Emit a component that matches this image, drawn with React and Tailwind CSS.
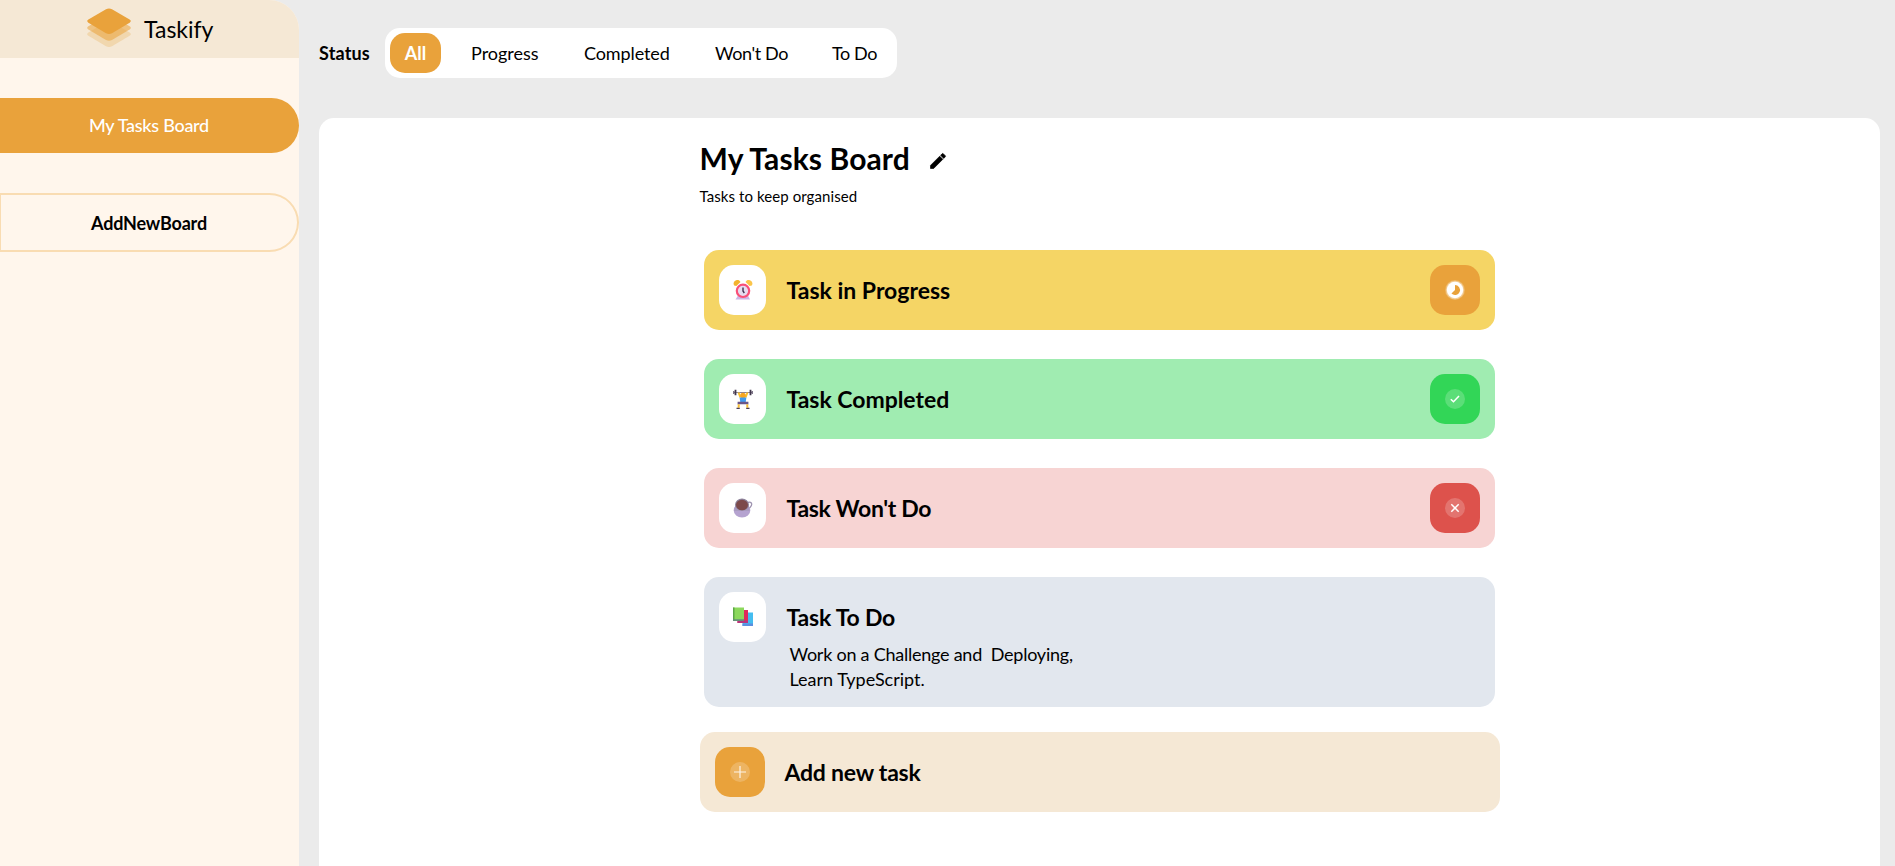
import React from "react";

function Logo() {
  return (
    <svg width="46" height="40" viewBox="0 0 46 40" className="shrink-0" fill="#e9a23b">
      <path opacity=".25" d="M20 14.2Q23 12.6 26 14.2L43.600 24.4Q46 26 43.600 27.800L26 38.300Q23 39.800 20 38.300L2.400 27.800Q0 26 2.400 24.400Z" />
      <path opacity=".55" d="M20 8Q23 6.400 26 8L43.600 18.200Q46 19.800 43.600 21.600L26 32.100Q23 33.600 20 32.100L2.400 21.600Q0 19.800 2.400 18.200Z" />
      <path d="M20 1.200Q23 -.4 26 1.200L43.600 11.400Q46 13 43.600 14.800L26 25.300Q23 26.800 20 25.300L2.400 14.800Q0 13 2.400 11.400Z" />
    </svg>
  );
}

function Clock() {
  return (
    <svg width="20" height="20" viewBox="0 0 20 20">
      <path d="M2.500 19.500l2.500-4h10l2 4z" fill="#cdb6e6" />
      <path d="M1.200 5.500a3.600 3.600 0 0 1 6.300-3.600L3.400 6z" fill="#f3b32f" />
      <path d="M18.800 5.500a3.600 3.600 0 0 0-6.300-3.600L16.600 6z" fill="#fbc54a" />
      <circle cx="10" cy="10.800" r="6.200" fill="#e6dcf0" stroke="#fa4f78" strokeWidth="2.200" />
      <path d="M10 7.500v3.500l1.300 2" stroke="#43304f" strokeWidth="1.400" fill="none" />
    </svg>
  );
}

function Lifter() {
  return (
    <svg width="20" height="20" viewBox="0 0 20 20">
      <path d="M1 3.500h18" stroke="#8b8496" strokeWidth="1" />
      <path d="M2.500 .8v5.400M17.500 .8v5.400" stroke="#40364c" strokeWidth="1.800" />
      <path d="M.8 2v3M19.200 2v3" stroke="#5c5168" strokeWidth="1.200" />
      <path d="M5.500 3.500l2 5M14.500 3.500l-2 5" stroke="#fbc02d" strokeWidth="2" />
      <circle cx="10" cy="6.600" r="2.800" fill="#f6a623" />
      <path d="M6.600 8.600h6.800l-.8 5.400H7.400z" fill="#3f9af0" />
      <path d="M4.600 12.800h10.800v2.600l-3-.2h-4.800l-3 .2z" fill="#6a5688" />
      <path d="M5.800 15.400l-.2 3.400M14.200 15.400l.2 3.400" stroke="#fbc02d" strokeWidth="2" />
      <path d="M3.500 19.300h3.300M13.200 19.300h3.300" stroke="#4a3d56" strokeWidth="1.200" />
    </svg>
  );
}

function Coffee() {
  return (
    <svg width="20" height="20" viewBox="0 0 20 20">
      <path d="M15 4.300c3.400-.6 4.300 1.300 3.400 3.300-.6 1.600-2 2.800-3.600 3.200" fill="none" stroke="#9e93b0" strokeWidth="1.300" />
      <ellipse cx="9" cy="12.500" rx="8.300" ry="7" fill="#b5a3d0" />
      <path d="M2.300 7h13.500l1 6H1z" fill="#a99bc0" />
      <ellipse cx="9" cy="6.500" rx="6.900" ry="6" fill="#8c8199" />
      <ellipse cx="9" cy="7" rx="6" ry="5.200" fill="#7c4a4b" />
    </svg>
  );
}

function Books() {
  return (
    <svg width="20" height="20" viewBox="0 0 20 20">
      <path d="M9.500 5.500h10.500v13.500H9.500z" fill="#44bdf0" />
      <path d="M9.500 16.500h10.500v2.500H9.500z" fill="#5b8fe0" />
      <path d="M4.500 3h10.500v13H4.500z" fill="#e02a5b" />
      <path d="M4.500 13.500h10.500V16H4.500z" fill="#b8347c" />
      <path d="M0 .5h11v13.300H0z" fill="#8cd85c" />
      <path d="M0 .5h1.500v13.300H0z" fill="#5ba647" />
      <path d="M0 12.300h11v1.600H0z" fill="#608a7c" />
    </svg>
  );
}

function StatusIcon({ kind }) {
  return (
    <svg width="20" height="20" viewBox="0 0 20 20" fill="none">
      <circle cx="10" cy="10" r="10" fill="#fff" fillOpacity=".2" />
      {kind === "progress" && (
        <>
          <circle cx="10" cy="10" r="9.200" fill="#fff" fillOpacity=".35" />
          <circle cx="10" cy="10" r="8.200" fill="#fff" />
          <path d="M10 5a5 5 0 1 1-3.540 8.540L10 10z" fill="#e9a23b" />
        </>
      )}
      {kind === "done" && <path d="M5.800 10.200l2.700 2.600 5.500-5.800" stroke="#fff" strokeWidth="1.500" />}
      {kind === "wont" && <path d="M6.300 6.300l7.400 7.400M13.700 6.300l-7.400 7.400" stroke="#fff" strokeWidth="1.500" />}
      {kind === "add" && <path d="M10 4v12M4 10h12" stroke="#fff" strokeOpacity=".85" strokeWidth="1.200" />}
    </svg>
  );
}

const tasks = [
  { title: "Task in Progress", track: "tracking-[0px]", bg: "bg-[#f5d565]", box: "bg-[#e9a23b]", kind: "progress", Icon: Clock },
  { title: "Task Completed", track: "tracking-[-0.03px]", bg: "bg-[#a0ecb1]", box: "bg-[#32d657]", kind: "done", Icon: Lifter },
  { title: "Task Won't Do", track: "tracking-[-0.33px]", bg: "bg-[#f7d4d3]", box: "bg-[#dd524c]", kind: "wont", Icon: Coffee },
];

function IconTile({ children }) {
  return <div className="flex h-[50px] w-[47px] shrink-0 items-center justify-center rounded-[15px] bg-white pl-px">{children}</div>;
}

export default function App() {
  return (
    <div className="flex h-screen overflow-hidden bg-[#ebebeb] font-['Lato',sans-serif] text-black">
      <aside className="w-[299px] shrink-0 overflow-hidden rounded-tr-[30px] bg-[#fff6ec]">
        <div className="flex h-[58px] items-start bg-[#f5e8d5] pt-[8px] pl-[86px]">
          <Logo />
          <span className="mt-[5px] ml-[12px] text-[23px] leading-[32px] whitespace-nowrap">Taskify</span>
        </div>
        <button className="mt-[40px] flex h-[55px] w-full items-center rounded-r-full bg-[#e9a23b] pl-[89px] text-[18px] font-medium tracking-[-0.27px] whitespace-nowrap text-white">
          My Tasks Board
        </button>
        <button className="mt-[40px] flex h-[59px] w-full items-center rounded-r-full border-2 border-l border-[#f9dcb2] pt-[2px] pl-[90px] text-[18px] font-bold tracking-[-0.18px] whitespace-nowrap">
          AddNewBoard
        </button>
      </aside>

      <div className="flex min-w-0 flex-1 flex-col pr-[15px] pl-[20px]">
        <nav className="mt-[28px] flex h-[50px] items-center text-[18px] whitespace-nowrap">
          <span className="w-[66px] font-bold tracking-[0.15px]">Status</span>
          <div className="flex h-full w-[512px] items-center rounded-[15px] bg-white pl-[5px]">
            <button className="flex h-[40px] w-[51px] items-center justify-center rounded-[15px] bg-[#e9a23b] font-bold text-white">All</button>
            <span className="ml-[30px] w-[113px]">Progress</span>
            <span className="w-[131px] tracking-[-0.1px]">Completed</span>
            <span className="w-[117px] tracking-[-0.4px]">Won't Do</span>
            <span className="tracking-[-0.4px]">To Do</span>
          </div>
        </nav>

        <main className="mt-[40px] flex flex-1 justify-center rounded-t-[15px] bg-white">
          <div className="w-[800px]">
            <div className="mt-[20px] flex h-[40px] items-center whitespace-nowrap">
              <h1 className="w-[228px] text-[30px] font-bold tracking-[0.1px]">My Tasks Board</h1>
              <svg width="20" height="20" viewBox="0 0 24 24" className="mt-[5px]">
                <path stroke="#000" strokeWidth=".8" d="M3 17.250V21h3.750L17.810 9.940l-3.750-3.750L3 17.250zM20.710 7.040a.996.996 0 0 0 0-1.410l-2.340-2.340a.996.996 0 0 0-1.410 0l-1.830 1.830 3.750 3.750 1.830-1.830z" />
              </svg>
            </div>
            <p className="mt-[8px] text-[15px] leading-[20px] tracking-[0.08px] whitespace-nowrap">Tasks to keep organised</p>

            <div className="mr-[5px] ml-[4px] mt-[44px] flex flex-col gap-[29px]">
              {tasks.map(({ title, track, bg, box, kind, Icon }) => (
                <section key={title} className={`flex h-[80px] items-center rounded-[15px] px-[15px] ${bg}`}>
                  <IconTile><Icon /></IconTile>
                  <h2 className={`ml-[21px] text-[23px] font-bold whitespace-nowrap ${track}`}>{title}</h2>
                  <div className={`ml-auto flex h-[50px] w-[50px] items-center justify-center rounded-[15px] ${box}`}>
                    <StatusIcon kind={kind} />
                  </div>
                </section>
              ))}
              <section className="flex h-[130px] rounded-[15px] bg-[#e2e7ee] p-[15px]">
                <IconTile><Books /></IconTile>
                <div className="ml-[21px] whitespace-nowrap">
                  <h2 className="text-[23px] leading-[50px] font-bold tracking-[-0.2px]">Task To Do</h2>
                  <p className="ml-[3px] text-[18px] leading-[25px] tracking-[-0.24px] whitespace-pre">Work on a Challenge and  Deploying,</p>
                  <p className="ml-[3px] text-[18px] leading-[25px]">Learn TypeScript.</p>
                </div>
              </section>
            </div>

            <section className="mt-[25px] flex h-[80px] items-center rounded-[15px] bg-[#f5e8d5] px-[15px]">
              <div className="flex h-[50px] w-[50px] items-center justify-center rounded-[15px] bg-[#e9a23b]">
                <StatusIcon kind="add" />
              </div>
              <h2 className="ml-[20px] text-[23px] font-bold tracking-[-0.22px] whitespace-nowrap">Add new task</h2>
            </section>
          </div>
        </main>
      </div>
    </div>
  );
}
